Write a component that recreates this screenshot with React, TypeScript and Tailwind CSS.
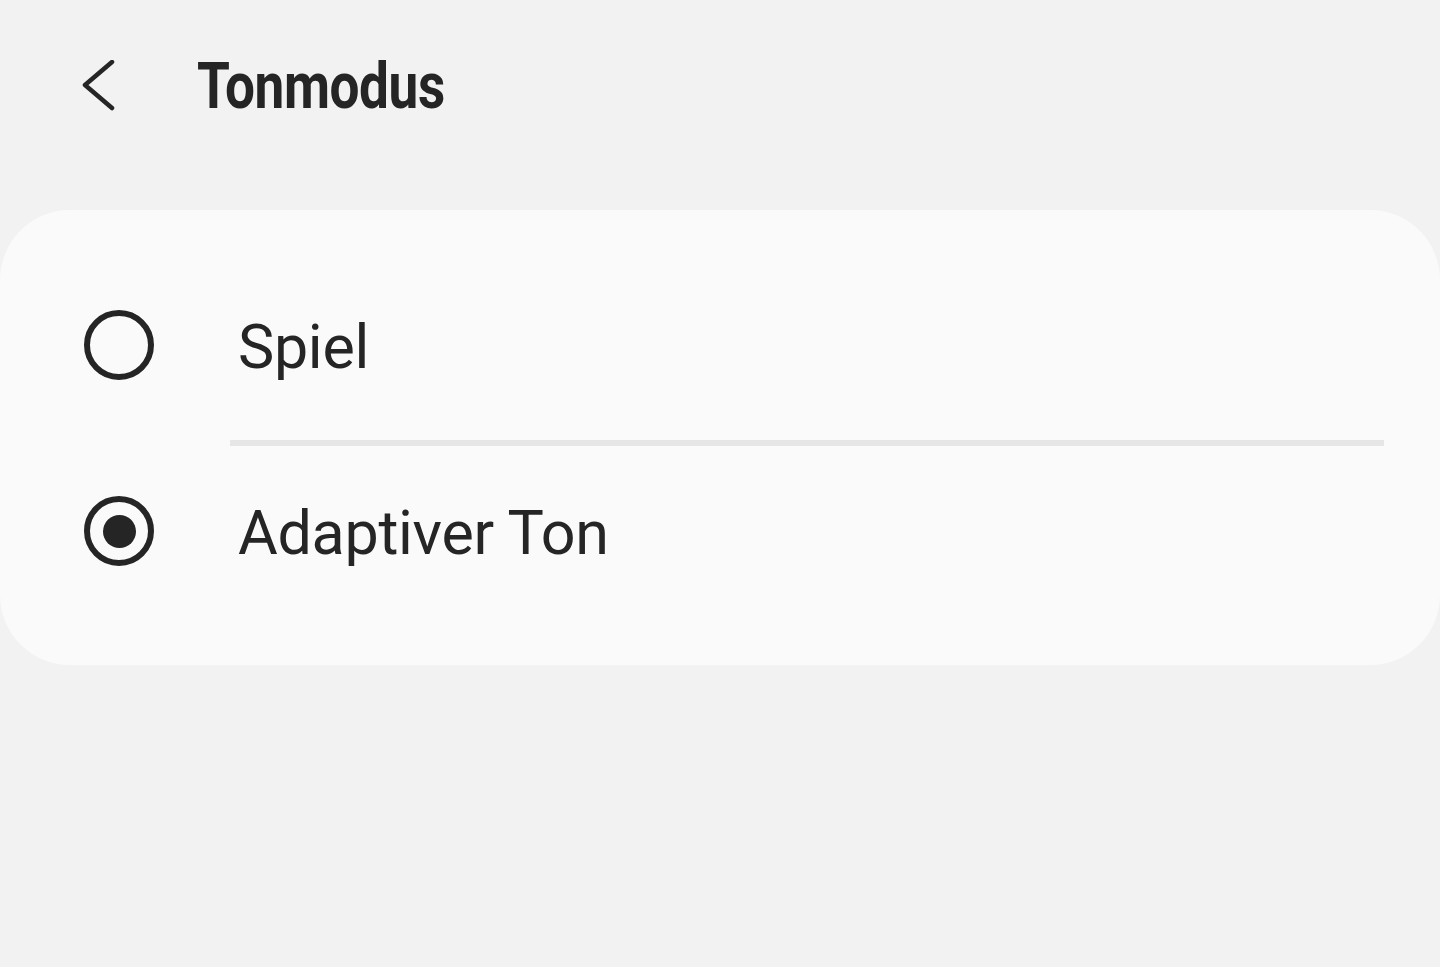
export default function App() {
  return (
    <div
      className="min-h-[967px] w-[1440px] bg-[#f2f2f2] text-[#252525]"
      style={{ fontFamily: "Roboto, 'Noto Sans', sans-serif" }}
    >
      {/* Header */}
      <div className="flex h-[170px] items-start pt-[42px]">
        <button type="button" className="ml-[81px] flex h-[90px] w-[36px] items-center">
          <svg width="36" height="54" viewBox="0 0 36 54" fill="none">
            <path
              d="M31 2 L4 25 L31 48"
              stroke="#252525"
              strokeWidth="4.5"
              strokeLinecap="round"
              strokeLinejoin="round"
            />
          </svg>
        </button>
        <h1 className="ml-[80px] h-[90px] origin-left scale-x-[0.83] text-[64px] font-bold leading-[90px] tracking-[-0.5px]">
          Tonmodus
        </h1>
      </div>

      {/* Options card */}
      <div className="mt-[40px] rounded-[70px] bg-[#fafafa] pt-[42px] pb-[49px]">
        <div className="flex h-[186px] items-center">
          <span className="ml-[84px] h-[70px] w-[70px] rounded-full border-[6px] border-[#252525]" />
          <span className="ml-[84px] pt-[4px] text-[61px] leading-none tracking-[-0.3px]">Spiel</span>
        </div>
        <div className="mt-[2px] ml-[230px] mr-[56px] h-[6px] bg-[#e6e6e6]" />
        <div className="flex h-[170px] items-center">
          <span className="ml-[84px] flex h-[70px] w-[70px] items-center justify-center rounded-full border-[6px] border-[#252525]">
            <span className="h-[33px] w-[33px] rounded-full bg-[#252525]" />
          </span>
          <span className="ml-[84px] pt-[4px] text-[61px] leading-none tracking-[-0.3px]">Adaptiver Ton</span>
        </div>
      </div>
    </div>
  );
}
